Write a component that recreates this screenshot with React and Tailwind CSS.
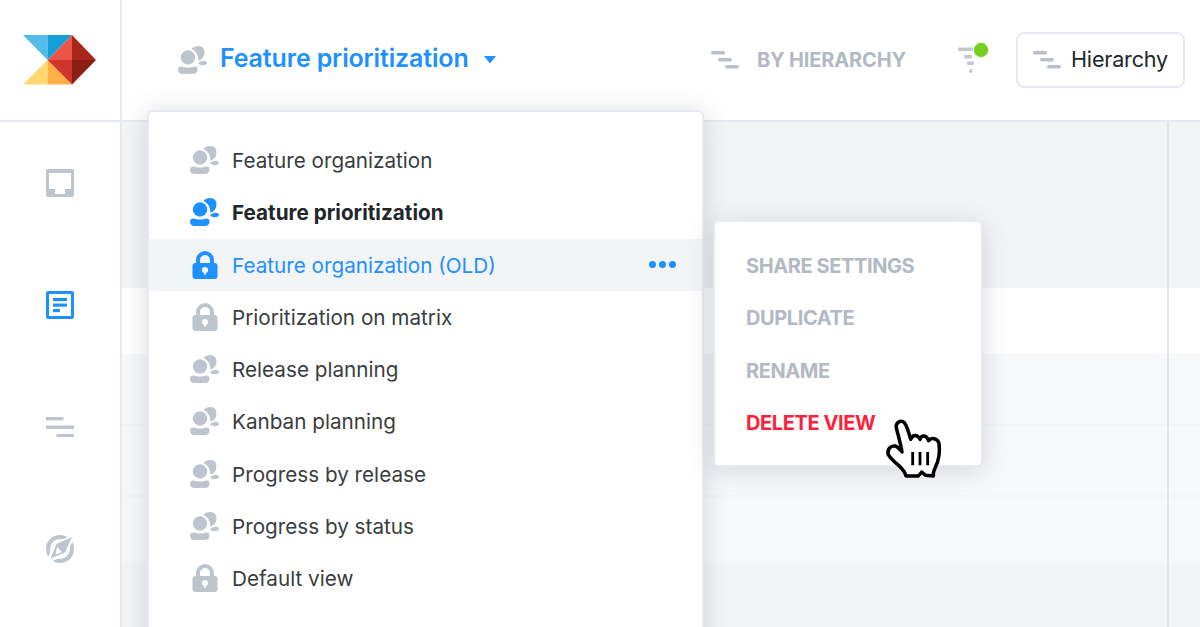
const GRAY = "#bec4cd";
const BLUE = "#1e90ff";

function Logo() {
  return (
    <svg width="74" height="50" viewBox="0 0 74 50">
      <polygon points="0,0 24.5,0 24.5,25" fill="#53bce8" />
      <polygon points="24.5,0 49,0 24.5,25" fill="#149ed8" />
      <polygon points="0,49.5 24.5,25 24.5,49.5" fill="#ffd871" />
      <polygon points="24.5,25 49,49.5 24.5,49.5" fill="#ffb044" />
      <polygon points="49,0 24.5,25 49,25" fill="#ec5449" />
      <polygon points="49,0 73,25 49,25" fill="#a92719" />
      <polygon points="24.5,25 49,25 49,49.5" fill="#cf3629" />
      <polygon points="49,25 73,25 49,49.5" fill="#8a1e13" />
    </svg>
  );
}

function PersonIcon({ color = GRAY }) {
  return (
    <svg width="29" height="28" viewBox="0 0 29 28" fill={color}>
      <circle cx="10" cy="11.5" r="7.2" />
      <path d="M0 23.5C0 21 2 20 4 20.5C7 21.8 13 21.8 16 20.5C18 20 19.5 21 19.5 23.5C19.5 26.5 17.5 28 15 28H4.5C2 28 0 26.5 0 23.5Z" />
      <path d="M13.5 3C15.5 0 21 -0.8 24 1C26.8 3 27 7 25.8 10C24.8 12.2 22.8 14.2 20.3 14.8C20.6 10 18.5 5.2 13.5 3Z" />
      <path d="M20 17.2C21.6 15.4 25 14.4 27.2 15C29.4 15.7 29.4 18 27.4 18.8C25 19.8 22 19.2 20 17.2Z" />
    </svg>
  );
}

function LockIcon({ color = GRAY }) {
  return (
    <svg className="ml-[2px]" width="26" height="28" viewBox="0 0 26 28">
      <path d="M6 14V9a7 7 0 0 1 14 0V14" fill="none" stroke={color} strokeWidth="4" />
      <rect x="0.5" y="12" width="25" height="16" rx="3" fill={color} />
      <circle cx="13" cy="19" r="3" fill="#fff" />
      <path d="M11.8 20h2.4l-.6 4h-1.2z" fill="#fff" />
    </svg>
  );
}

function HierarchyIcon() {
  return (
    <svg width="28" height="18" viewBox="0 0 28 18" fill="#b9bfc8">
      <rect x="0" y="0" width="14" height="3.4" rx="1.7" />
      <rect x="7" y="7" width="14" height="3.4" rx="1.7" />
      <rect x="14" y="14" width="14" height="3.4" rx="1.7" />
    </svg>
  );
}

function FilterIcon() {
  return (
    <svg className="overflow-visible" width="32" height="32" viewBox="0 0 32 32">
      <g fill="#c3c8d0">
        <rect x="0" y="3.6" width="15" height="3.4" rx="1" />
        <rect x="6" y="11" width="8" height="3.4" rx="1" />
        <rect x="9" y="17.6" width="7" height="3.4" rx="1" />
        <rect x="11" y="25.3" width="3.6" height="3.4" rx="1" />
      </g>
      <circle cx="23" cy="6" r="7.2" fill="#74cf1e" />
    </svg>
  );
}

function InboxIcon() {
  return (
    <svg width="28" height="28" viewBox="0 0 28 28">
      <rect width="28" height="28" rx="2" fill={GRAY} />
      <path d="M3 4h22v16h-6v5H9v-5H3z" fill="#fff" />
    </svg>
  );
}

function DocIcon() {
  return (
    <svg width="28" height="28" viewBox="0 0 28 28">
      <rect width="28" height="28" rx="2.5" fill={BLUE} />
      <rect x="3" y="3" width="22" height="22" fill="#fff" />
      <g fill={BLUE}>
        <rect x="7" y="7" width="14" height="3.2" />
        <rect x="7" y="12.5" width="14" height="3.2" />
        <rect x="7" y="18" width="7" height="3.2" />
      </g>
    </svg>
  );
}

function ListIcon() {
  return (
    <svg width="28" height="20" viewBox="0 0 28 20" fill={GRAY}>
      <rect x="0" y="0" width="17.5" height="3.4" />
      <rect x="0" y="8.5" width="28" height="3.4" />
      <rect x="10.5" y="17" width="17.5" height="3.4" />
    </svg>
  );
}

function CompassIcon() {
  return (
    <svg width="28" height="28" viewBox="0 0 28 28">
      <circle cx="14" cy="14" r="12" fill="none" stroke={GRAY} strokeWidth="4" />
      <path d="M29 -1L21 20L-1 29L8 8Z" fill="#fff" />
      <path d="M26 2L19 17.5L4.5 23.5L10.5 9Z" fill={GRAY} />
      <path d="M11 12L16 17L9.5 19.5Z" fill="#fff" />
    </svg>
  );
}

function Hand() {
  return (
    <svg width="70" height="75" viewBox="0 0 210 225">
      <path
        d="M49 54C46 38 62 28 73 38C80 45 85 62 92 88C98 74 112 72 120 88C124 74 140 74 146 92C154 82 172 84 177 100C180 125 175 155 166 172C161 182 159 188 160 198L137 196L125 186L115 198H78C76 186 68 178 58 168C46 158 30 145 24 132C22 118 32 106 45 108C53 110 60 118 66 126C62 100 55 78 49 54Z"
        fill="#fff"
        stroke="#000"
        strokeWidth="10.5"
        strokeLinejoin="round"
      />
      <path d="M98 126V166M120 126V166M143 126V166" stroke="#000" strokeWidth="8.5" fill="none" />
    </svg>
  );
}

const views = [
  { name: "Feature organization", icon: "person" },
  { name: "Feature prioritization", icon: "person", selected: true },
  { name: "Feature organization (OLD)", icon: "lock", hover: true },
  { name: "Prioritization on matrix", icon: "lock" },
  { name: "Release planning", icon: "person" },
  { name: "Kanban planning", icon: "person" },
  { name: "Progress by release", icon: "person" },
  { name: "Progress by status", icon: "person" },
  { name: "Default view", icon: "lock" },
];

function ViewRow({ view }) {
  const active = view.selected || view.hover;
  const color = active ? BLUE : GRAY;
  return (
    <div className={`flex h-[52.25px] items-center pl-[41px] pr-[26px] ${view.hover ? "bg-[#f3f4f6]" : ""}`}>
      <div className="flex w-[42px] shrink-0 items-center">
        {view.icon === "person" ? <PersonIcon color={color} /> : <LockIcon color={color} />}
      </div>
      <span
        className={`flex-1 pt-[1px] text-[20.7px] ${
          view.selected ? "font-bold text-[#232629]" : view.hover ? "text-[#1e90ff]" : "text-[#3a3d40]"
        }`}
      >
        {view.name}
      </span>
      {view.hover && (
        <div className="flex gap-[3px]">
          <span className="h-[7px] w-[7px] rounded-full bg-[#1e90ff]" />
          <span className="h-[7px] w-[7px] rounded-full bg-[#1e90ff]" />
          <span className="h-[7px] w-[7px] rounded-full bg-[#1e90ff]" />
        </div>
      )}
    </div>
  );
}

const actions = [
  { label: "SHARE SETTINGS" },
  { label: "DUPLICATE" },
  { label: "RENAME" },
  { label: "DELETE VIEW", danger: true },
];

export default function App() {
  return (
    <div className="relative flex h-[627px] w-[1200px] flex-col overflow-hidden bg-white font-['Inter',sans-serif]">
      <header className="flex h-[122px] shrink-0 border-b-2 border-[#e6e9ef]">
        <div className="flex w-[122px] shrink-0 items-center justify-center border-r-2 border-[#e6e9ef]">
          <Logo />
        </div>
        <div className="flex flex-1 items-center pl-[56px] pr-[15px]">
          <PersonIcon />
          <span className="mb-[2px] ml-[13px] text-[25px] font-semibold tracking-[-0.15px] text-[#1e90ff]">Feature prioritization</span>
          <svg className="ml-[15px]" width="12" height="8" viewBox="0 0 12 8">
            <path d="M0 0H12L6 7.5Z" fill={BLUE} />
          </svg>
          <div className="ml-auto flex items-center">
            <HierarchyIcon />
            <span className="ml-[18px] text-[20px] font-bold tracking-[-0.15px] text-[#b2b9c3]">BY HIERARCHY</span>
            <div className="mb-[1px] ml-[52px] mr-[26px]">
              <FilterIcon />
            </div>
            <div className="flex h-[56px] w-[169px] items-center rounded-[8px] border-2 border-[#e6e9ef] pl-[15px]">
              <HierarchyIcon />
              <span className="mb-[2px] ml-[10px] text-[21.6px] tracking-[-0.2px] text-[#232629]">Hierarchy</span>
            </div>
          </div>
        </div>
      </header>
      <div className="flex flex-1">
        <aside className="flex w-[122px] shrink-0 flex-col border-r-2 border-[#e6e9ef]">
          <div className="flex h-[122px] items-center justify-center"><InboxIcon /></div>
          <div className="flex h-[122px] items-center justify-center"><DocIcon /></div>
          <div className="flex h-[122px] items-center justify-center"><ListIcon /></div>
          <div className="flex h-[122px] items-center justify-center"><CompassIcon /></div>
        </aside>
        <main className="flex flex-1 flex-col bg-[#f3f4f6] pt-[166px]">
          <div className="h-[66px] bg-white" />
          <div className="h-[72px] border-b-2 border-[#f2f4f5] bg-[#f7f8fa]" />
          <div className="h-[71px] border-b-2 border-[#f2f4f5] bg-[#f7f8fa]" />
          <div className="h-[66px] bg-[#f7f8fa]" />
        </main>
      </div>
      <div className="absolute bottom-0 left-[1167px] top-[122px] w-[2px] bg-[#d9dde0]/70" />

      <div className="absolute left-[147px] top-[110px] h-[560px] w-[557px] rounded-[6px] border-2 border-[#e6e9ef] bg-white pt-[22px] shadow-[0_2px_26px_rgba(70,80,100,0.2)]">
        {views.map((view) => (
          <ViewRow key={view.name} view={view} />
        ))}
      </div>

      <div className="absolute left-[713px] top-[220px] h-[247px] w-[270px] rounded-[6px] border-2 border-[#e6e9ef] bg-white pt-[18px] shadow-[0_4px_26px_rgba(70,80,100,0.2)]">
        {actions.map((a) => (
          <div
            key={a.label}
            className={`flex h-[52.25px] items-center pl-[31px] text-[20px] font-bold tracking-[-0.4px] ${
              a.danger ? "text-[#ff1f3d]" : "text-[#b2b9c3]"
            }`}
          >
            {a.label}
          </div>
        ))}
      </div>

      <div className="absolute left-[880px] top-[410px]">
        <Hand />
      </div>
    </div>
  );
}
